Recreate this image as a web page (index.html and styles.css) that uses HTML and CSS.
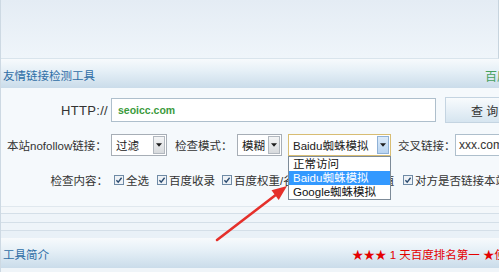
FILE: index.html
```html
<!DOCTYPE html>
<html lang="zh-CN">
<head>
<meta charset="utf-8">
<title>友情链接检测工具</title>
<link rel="stylesheet" href="styles.css">
</head>
<body>
<div class="page">
  <div class="top"></div>
  <div class="hbar">
    <span class="title">友情链接检测工具</span>
    <span class="green">百度权重查询</span>
  </div>
  <div class="form">
    <div class="row r1">
      <span class="lab http">HTTP://</span>
      <div class="url">seoicc.com</div>
      <div class="btn">查 询</div>
    </div>
    <div class="row r2">
      <span class="lab1">本站nofollow链接：</span>
      <div class="sel s1"><span class="val">过滤</span><span class="arr"><svg viewBox="0 0 7 4"><path d="M0 0H7L3.5 4Z"/></svg></span></div>
      <span class="lab2">检查模式：</span>
      <div class="sel s2"><span class="val">模糊</span><span class="arr"><svg viewBox="0 0 7 4"><path d="M0 0H7L3.5 4Z"/></svg></span></div>
      <div class="sel s3 focus"><span class="val">Baidu蜘蛛模拟</span><span class="arr hot"><svg viewBox="0 0 7 4"><path d="M0 0H7L3.5 4Z"/></svg></span></div>
      <span class="lab3">交叉链接：</span>
      <div class="inp2">xxx.com</div>
    </div>
    <div class="row r3">
      <span class="lab">检查内容：</span>
      <span class="chk c1"><svg class="cb" viewBox="0 0 10 10"><rect x=".5" y=".5" width="9" height="9"/><path d="M2.4 5.2L4.2 7.2L7.6 2.8"/></svg>全选</span>
      <span class="chk c2"><svg class="cb" viewBox="0 0 10 10"><rect x=".5" y=".5" width="9" height="9"/><path d="M2.4 5.2L4.2 7.2L7.6 2.8"/></svg>百度收录</span>
      <span class="chk c3"><svg class="cb" viewBox="0 0 10 10"><rect x=".5" y=".5" width="9" height="9"/><path d="M2.4 5.2L4.2 7.2L7.6 2.8"/></svg><span class="clip">百度权重/谷歌PR/导出链接数值</span></span>
      <span class="chk c4"><svg class="cb" viewBox="0 0 10 10"><rect x=".5" y=".5" width="9" height="9"/><path d="M2.4 5.2L4.2 7.2L7.6 2.8"/></svg>对方是否链接本站</span>
    </div>
  </div>
  <div class="g g1"></div>
  <div class="g g2"></div>
  <div class="g g3"></div>
  <div class="g g4"></div>
  <div class="bbar">
    <span class="title">工具简介</span>
    <span class="stars"><span class="st">★★★</span> 1 天百度排名第一 <span class="st">★</span>使用</span>
  </div>
  <div class="tail"></div>

  <ul class="dropdown">
    <li>正常访问</li>
    <li class="on">Baidu蜘蛛模拟</li>
    <li>Google蜘蛛模拟</li>
  </ul>

  <svg class="annot" viewBox="0 0 498 272" width="498" height="272">
    <line x1="216" y1="240" x2="276" y2="194" stroke="#e5302b" stroke-width="2.6" stroke-linecap="round"/>
    <polygon points="286,186 277.7,200 270.5,190.3" fill="#e5302b"/>
  </svg>
</div>
</body>
</html>
```
FILE: styles.css
```css
* { box-sizing: border-box; margin: 0; padding: 0; }

body {
  width: 499px;
  height: 272px;
  overflow: hidden;
  background: #eef4f9;
  font-family: "Liberation Sans", "Noto Sans CJK SC", sans-serif;
  font-size: 11.5px;
  color: #333;
}

.page {
  position: relative;
  width: 499px;
  height: 272px;
  overflow: hidden;
  border-left: 1px solid #cdd9e3;
}

.top {
  height: 59px;
  background: linear-gradient(#e4ecf4, #eff5fa);
  border-bottom: 1px solid #d9e4ec;
  border-right: 1px solid #c7d4de;
}

.hbar, .bbar {
  display: flex;
  align-items: center;
  background: linear-gradient(#f7fafc 0%, #e6f0f7 40%, #cadcea 100%);
}

.hbar {
  height: 29px;
  padding: 3px 0 0 2px;
}

.title {
  color: #2f6ea6;
  font-size: 11.5px;
  white-space: nowrap;
}

.green {
  margin-left: auto;
  width: 14px;
  overflow: hidden;
  white-space: nowrap;
  color: #45a15e;
  font-size: 12px;
}

.form {
  height: 119px;
  background: #f5f9fc;
  border-bottom: 1px solid #e0e8ee;
  padding-top: 10px;
}

.row {
  display: flex;
  align-items: center;
  white-space: nowrap;
}

.lab {
  width: 107px;
  flex: none;
  text-align: right;
}

.http {
  font-size: 13px;
  letter-spacing: 0.3px;
  color: #333;
}

.r1 { height: 24px; }

.url {
  flex: none;
  margin-left: 3px;
  width: 325px;
  height: 24px;
  border: 1px solid #aebfcc;
  background: #fff;
  display: flex;
  align-items: center;
  padding-left: 6px;
  color: #3b9a3c;
  font-weight: bold;
  font-size: 10.5px;
}

.btn {
  flex: none;
  margin-left: 9px;
  width: 70px;
  height: 26px;
  border: 1px solid #c4d4e1;
  background: linear-gradient(#f8fbfd, #d6e5f0);
  display: flex;
  align-items: center;
  padding-left: 25px;
  font-size: 12px;
  color: #333;
}

.r2 {
  margin-top: 12px;
  height: 22px;
  padding-left: 6px;
}

.lab1 { width: 101px; flex: none; }

.sel {
  flex: none;
  height: 22px;
  display: flex;
  align-items: stretch;
  border: 1px solid #a7aeb6;
  background: #fff;
}

.sel .val {
  flex: 1;
  display: flex;
  align-items: center;
  padding-left: 4px;
  font-size: 11.5px;
  color: #222;
  overflow: hidden;
}

.arr {
  flex: none;
  width: 12px;
  margin: 1px;
  border: 1px solid #b2b8bf;
  background: linear-gradient(#f4f5f6, #d7dadd);
  display: flex;
  align-items: center;
  justify-content: center;
}

.arr svg { width: 6px; height: 4px; fill: #1c1c1c; }

.arr.hot {
  border-color: #8fb1d6;
  background: linear-gradient(#dcebfa, #b9d4f1);
}

.s1 { margin-left: 3px; width: 56px; }

.lab2 { flex: none; margin-left: 8px; width: 62px; }

.s2 { width: 45px; }

.s3 { margin-left: 6px; width: 103px; }

.sel.focus { border-color: #d8bd73; }

.lab3 { flex: none; margin-left: 7px; width: 57px; }

.inp2 {
  flex: none;
  width: 70px;
  height: 22px;
  border: 1px solid #aebfcc;
  background: #fff;
  display: flex;
  align-items: center;
  padding-left: 3px;
  font-size: 12px;
  color: #333;
}

.r3 {
  margin-top: 16px;
  height: 16px;
}

.chk {
  flex: none;
  display: flex;
  align-items: center;
}

.cb {
  width: 10px;
  height: 10px;
  margin-right: 2px;
  flex: none;
}

.cb rect { fill: #eef2f6; stroke: #6f8ba6; }
.cb path { fill: none; stroke: #2a4b70; stroke-width: 1.4; }

.c1 { margin-left: 6px; }
.c2 { margin-left: 8px; }
.c3 { margin-left: 7px; }
.c4 { margin-left: 7px; }

.clip {
  display: inline-block;
  width: 162px;
  overflow: hidden;
}

.g { background: #eef4f9; border-bottom: 1px solid #d4dfe8; }
.g1 { height: 7px; background: #f3f7fa; }
.g2 { height: 9px; }
.g3 { height: 8px; }
.g4 { height: 7px; border-bottom: none; background: #e9f1f7; }

.bbar {
  height: 30px;
  padding: 2px 0 0 2px;
}

.stars {
  margin-left: auto;
  width: 147px;
  overflow: hidden;
  white-space: nowrap;
  color: #e40000;
  font-size: 11.5px;
}

.st {
  font-family: "Noto Sans CJK SC", sans-serif;
  font-size: 11.5px;
}

.tail { height: 4px; background: #f0f5f9; }

.dropdown {
  position: absolute;
  left: 287px;
  top: 156px;
  width: 103px;
  list-style: none;
  background: #fff;
  border: 1px solid #7d8b98;
}

.dropdown li {
  height: 14px;
  line-height: 14px;
  padding-left: 4px;
  font-size: 11.5px;
  color: #111;
  white-space: nowrap;
}

.dropdown li.on {
  background: #3399ff;
  color: #fff;
}

.annot {
  position: absolute;
  left: 0;
  top: 0;
  pointer-events: none;
}
```
